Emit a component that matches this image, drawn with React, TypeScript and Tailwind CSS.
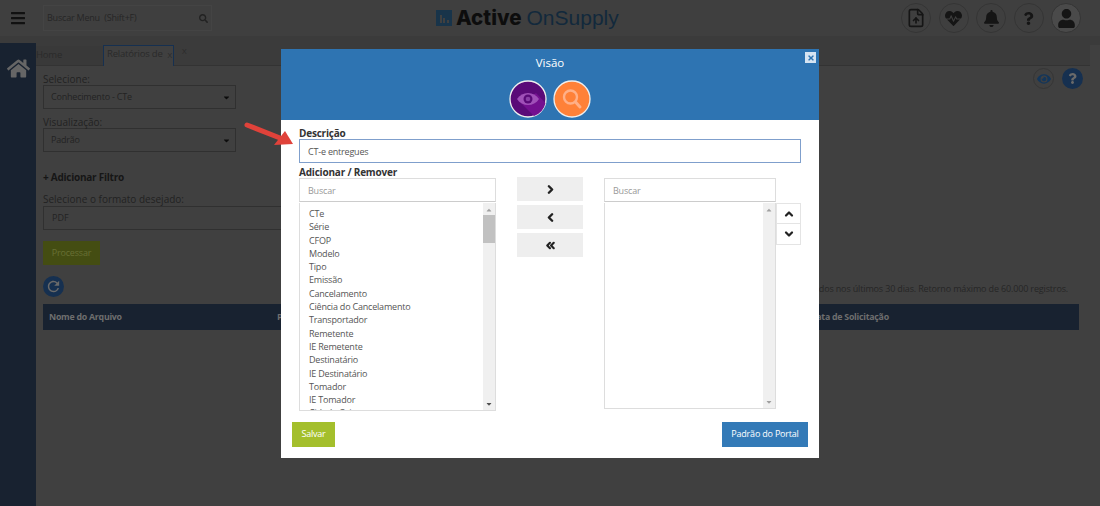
import React from 'react';
import { FaBars, FaSearch, FaHome, FaBell, FaQuestion, FaUser, FaHeartbeat, FaEye, FaCaretDown, FaCaretUp, FaTimes } from 'react-icons/fa';
import { MdRefresh } from 'react-icons/md';
import { FileUp, ChevronRight, ChevronLeft, ChevronUp, ChevronDown, ChevronsLeft } from 'lucide-react';

const campos = ['CTe', 'Série', 'CFOP', 'Modelo', 'Tipo', 'Emissão', 'Cancelamento', 'Ciência do Cancelamento', 'Transportador', 'Remetente', 'IE Remetente', 'Destinatário', 'IE Destinatário', 'Tomador', 'IE Tomador', 'Cidade Origem'];

function Scrollbar({ thumb }: { thumb?: boolean }) {
  return (
    <div className="w-[12px] shrink-0 bg-[#f0f0f0] flex flex-col items-center">
      <FaCaretUp className="w-2 h-2 mt-[3px] text-[#a0a0a0]" />
      {thumb && <div className="w-full h-[28px] mt-px bg-[#c1c1c1]" />}
      <FaCaretDown className={`w-2 h-2 mt-auto mb-[2px] ${thumb ? 'text-[#505050]' : 'text-[#a0a0a0]'}`} />
    </div>
  );
}

function HeaderCircle({ children }: { children: React.ReactNode }) {
  return (
    <div className="w-[30px] h-[30px] rounded-full border border-[#353535] flex items-center justify-center text-[#151515]">
      {children}
    </div>
  );
}

function MoveButton({ children }: { children: React.ReactNode }) {
  return (
    <button className="w-[66px] h-[24px] bg-[#eeeeee] flex items-center justify-center text-[#222]">
      {children}
    </button>
  );
}

function Select({ value }: { value: string }) {
  return (
    <div className="w-[193px] h-[24px] border border-[#303030] flex items-center justify-between pl-[7px] pr-[4px] text-[9px] tracking-[-0.2px] text-[#232323]">
      {value}
      <FaCaretDown className="w-[9px] h-[9px] text-[#0c0c0c]" />
    </div>
  );
}

export default function App() {
  return (
    <div className="relative w-[1100px] h-[506px] overflow-hidden bg-[#404040] font-['Open_Sans',sans-serif]">
      {/* pagina por tras do modal */}
      <header className="h-[36px] bg-[#3f3f3f] flex items-center">
        <div className="w-[36px] flex justify-center">
          <FaBars className="w-[16px] h-[16px] text-[#111]" />
        </div>
        <div className="ml-[7px] w-[169px] h-[26px] border border-[#444] flex items-center justify-between pl-[3px] pr-[3px] text-[9px] tracking-[-0.2px] text-[#262626]">
          <span>Buscar Menu&nbsp; (Shift+F)</span>
          <FaSearch className="w-[9px] h-[9px] text-[#222]" />
        </div>
        <div className="ml-[224px] flex items-center">
          <div className="w-[16px] h-[16px] bg-[#18344a] flex items-end justify-center gap-[1.5px] pb-[3px]">
            <span className="w-[2px] h-[8px] bg-[#404040]" />
            <span className="w-[2px] h-[5px] bg-[#404040]" />
            <span className="w-[2px] h-[3px] bg-[#404040]" />
          </div>
          <div className="ml-[4px] flex items-baseline">
            <span className="font-['Inter',sans-serif] text-[20.5px] font-extrabold text-[#0d0d0d] leading-none">Active</span>
            <span className="ml-[5px] font-['Liberation_Sans',sans-serif] text-[21px] text-[#12293c] leading-none">OnSupply</span>
          </div>
        </div>
        <div className="ml-auto mr-[19px] flex items-center gap-[7.5px]">
          <HeaderCircle><FileUp className="w-[20px] h-[20px]" strokeWidth={2} /></HeaderCircle>
          <HeaderCircle><FaHeartbeat className="w-[17px] h-[17px]" /></HeaderCircle>
          <HeaderCircle><FaBell className="w-[17px] h-[17px]" /></HeaderCircle>
          <HeaderCircle><FaQuestion className="w-[13px] h-[13px]" /></HeaderCircle>
          <div className="w-[30px] h-[30px] rounded-full bg-[#4a4a4a] border border-[#353535] flex items-center justify-center text-[#151515]">
            <FaUser className="w-[19px] h-[19px]" />
          </div>
        </div>
      </header>

      <div className="flex h-[470px] bg-[#3b3b3b]">
        <aside className="w-[36px] mt-[7px] bg-[#182230] flex justify-center pt-[14px]">
          <FaHome className="w-[23px] h-[23px] text-[#666]" />
        </aside>
        <main className="flex-1 min-w-0 mt-[9px] bg-[#404040]">
          <div className="mr-[10px] h-[21px] border-b border-[#333] bg-[#3b3b3b] flex items-end text-[9.5px] tracking-[-0.2px] text-[#2a2a2a]">
            <div className="w-[67px] h-[19px] bg-[#393939] flex items-center">Home</div>
            <div className="w-[71px] h-[21px] bg-[#404040] border-t border-x border-[#163050] flex items-center pl-[3px] pb-[3px] gap-[5px] -mb-px whitespace-nowrap">
              <span>Relatórios de</span>
              <span className="text-[8px]">X</span>
            </div>
            <span className="ml-[8px] mb-[8px] text-[8px]">X</span>
          </div>

          <div className="pl-[7px] pr-[21px] relative">
            <div className="pt-[7px] text-[10px] leading-[12px] text-[#222]">Selecione:</div>
            <Select value="Conhecimento - CTe" />
            <div className="mt-[7px] text-[10px] leading-[12px] text-[#222]">Visualização:</div>
            <Select value="Padrão" />
            <div className="mt-[18px] text-[10px] tracking-[-0.25px] leading-[14px] font-bold text-[#161616]">+ Adicionar Filtro</div>
            <div className="mt-[8px] text-[10px] leading-[14px] text-[#222]">Selecione o formato desejado:</div>
            <div className="w-[500px] h-[24px] border border-[#303030] flex items-center pl-[8px] text-[9px] text-[#232323]">PDF</div>
            <button className="mt-[11px] block w-[57px] h-[24px] bg-[#444d12] text-[#687034] text-[9px] tracking-[-0.2px]">Processar</button>
            <div className="mt-[11px] flex items-center justify-between">
              <div className="w-[21px] h-[21px] rounded-full bg-[#163050] flex items-center justify-center text-[#6a6a6a]">
                <MdRefresh className="w-[17px] h-[17px]" />
              </div>
              <span className="text-[9px] tracking-[-0.15px] text-[#262626] mr-[11px] mt-[5px]">Serão exibidos os arquivos emitidos nos últimos 30 dias. Retorno máximo de 60.000 registros.</span>
            </div>
            <div className="mt-[7px] pt-px h-[26px] bg-[#182230] flex items-center text-[8.8px] tracking-[-0.25px] font-bold text-[#6e6e6e] pl-[6px]">
              <span className="w-[228px]">Nome do Arquivo</span>
              <span className="w-[533px]">Processamento</span>
              <span>Data de Solicitação</span>
            </div>
            <div className="absolute right-[17px] top-[2px] flex gap-[8px]">
              <div className="w-[21px] h-[21px] rounded-full border border-[#353535] flex items-center justify-center text-[#14365a]">
                <FaEye className="w-[14px] h-[14px]" />
              </div>
              <div className="w-[21px] h-[21px] rounded-full bg-[#163050] flex items-center justify-center text-[#6a6a6a]">
                <FaQuestion className="w-[11px] h-[11px]" />
              </div>
            </div>
          </div>
        </main>
      </div>

      {/* seta vermelha da anotacao */}
      <svg className="absolute left-[240px] top-[118px] z-20" width="62" height="36" viewBox="0 0 62 36">
        <path d="M7 7 L40 20" stroke="#e0423a" strokeWidth="5" strokeLinecap="round" fill="none" />
        <path d="M34 27 L53 26 L45 13 Z" fill="#e0423a" />
      </svg>

      {/* modal Visao */}
      <div className="absolute left-[281px] top-[49px] z-10 w-[538px] h-[409px] bg-white">
        <div className="relative h-[71px] bg-[#2e74b2] flex flex-col items-center">
          <div className="mt-[6px] text-[11.5px] leading-[16px] text-white">Visão</div>
          <div className="mt-[9px] flex gap-[6px]">
            <svg width="38" height="38" viewBox="0 0 38 38">
              <circle cx="19" cy="19" r="18" fill="#5a0a78" stroke="#eeeeee" strokeWidth="1.3" />
              <path d="M12 23 L25 36 A18 18 0 0 0 36.5 23 L27 13 Z" fill="#741090" />
              <path d="M8 19 C13 11 25 11 30 19 C25 27 13 27 8 19 Z" fill="#a050b8" />
              <circle cx="19" cy="19" r="4.5" fill="#5a0a78" />
              <circle cx="19" cy="19" r="2.3" fill="#8a3ea6" />
            </svg>
            <svg width="38" height="38" viewBox="0 0 38 38">
              <circle cx="19" cy="19" r="18" fill="#ff8138" stroke="#eeeeee" strokeWidth="1.3" />
              <circle cx="17.5" cy="17" r="6.5" fill="none" stroke="#ffb088" strokeWidth="2.4" />
              <path d="M22.5 22 L27 27" stroke="#ffb088" strokeWidth="3" strokeLinecap="round" />
            </svg>
          </div>
          <button className="absolute right-[3px] top-[3px] w-[11px] h-[11px] bg-[#d6e4f2] flex items-center justify-center text-[#2e74b2]">
            <FaTimes className="w-[8px] h-[8px]" />
          </button>
        </div>

        <div className="px-[18px]">
          <div className="mt-[8px] text-[10px] tracking-[-0.2px] leading-[11px] font-bold text-[#333]">Descrição</div>
          <div className="h-[24px] border border-[#7f9fcc] flex items-center pl-[8px] pt-px text-[9px] tracking-[-0.2px] text-[#555]">CT-e entregues</div>
          <div className="mt-[4px] text-[10px] tracking-[-0.2px] leading-[11px] font-bold text-[#333]">Adicionar / Remover</div>

          <div className="flex">
            <div className="w-[197px] shrink-0">
              <div className="h-[24px] border border-[#dddddd] border-b-[#cccccc] flex items-center pl-[8px] pt-px text-[9px] tracking-[-0.2px] text-[#999]">Buscar</div>
              <div className="mt-px h-[208px] flex border-x border-b border-[#dddddd] overflow-hidden">
                <div className="flex-1 min-w-0 pl-[9px] pt-[4px] text-[9px] tracking-[-0.2px] leading-[13.3px] text-[#555] overflow-hidden">
                  {campos.map((c) => (
                    <div key={c} className="whitespace-nowrap">{c}</div>
                  ))}
                </div>
                <Scrollbar thumb />
              </div>
            </div>

            <div className="ml-[21px] w-[66px] shrink-0 flex flex-col gap-[4px] -mt-px">
              <MoveButton><ChevronRight className="w-[13px] h-[13px]" strokeWidth={4.5} /></MoveButton>
              <MoveButton><ChevronLeft className="w-[13px] h-[13px]" strokeWidth={4.5} /></MoveButton>
              <MoveButton><ChevronsLeft className="w-[13px] h-[13px]" strokeWidth={4} /></MoveButton>
            </div>

            <div className="ml-[21px] w-[172px] shrink-0">
              <div className="h-[24px] border border-[#dddddd] border-b-[#cccccc] flex items-center pl-[8px] pt-px text-[9px] tracking-[-0.2px] text-[#999]">Buscar</div>
              <div className="mt-px h-[206px] flex border-x border-b border-[#dddddd]">
                <div className="flex-1" />
                <Scrollbar />
              </div>
            </div>

            <div className="w-[25px] mt-[25px] shrink-0">
              <button className="w-full h-[21px] border border-[#e4e4e4] flex items-center justify-center text-[#222]">
                <ChevronUp className="w-[12px] h-[12px]" strokeWidth={4.5} />
              </button>
              <button className="w-full h-[21px] border-x border-b border-[#e4e4e4] flex items-center justify-center text-[#222]">
                <ChevronDown className="w-[12px] h-[12px]" strokeWidth={4.5} />
              </button>
            </div>
          </div>
        </div>

        <div className="mt-[11px] px-[11px] flex justify-between">
          <button className="w-[43px] h-[25px] pb-px bg-[#a4bf2c] text-white text-[9px] tracking-[-0.2px]">Salvar</button>
          <button className="w-[86px] h-[25px] pb-px bg-[#337ab7] text-white text-[9px] tracking-[-0.2px]">Padrão do Portal</button>
        </div>
      </div>
    </div>
  );
}
